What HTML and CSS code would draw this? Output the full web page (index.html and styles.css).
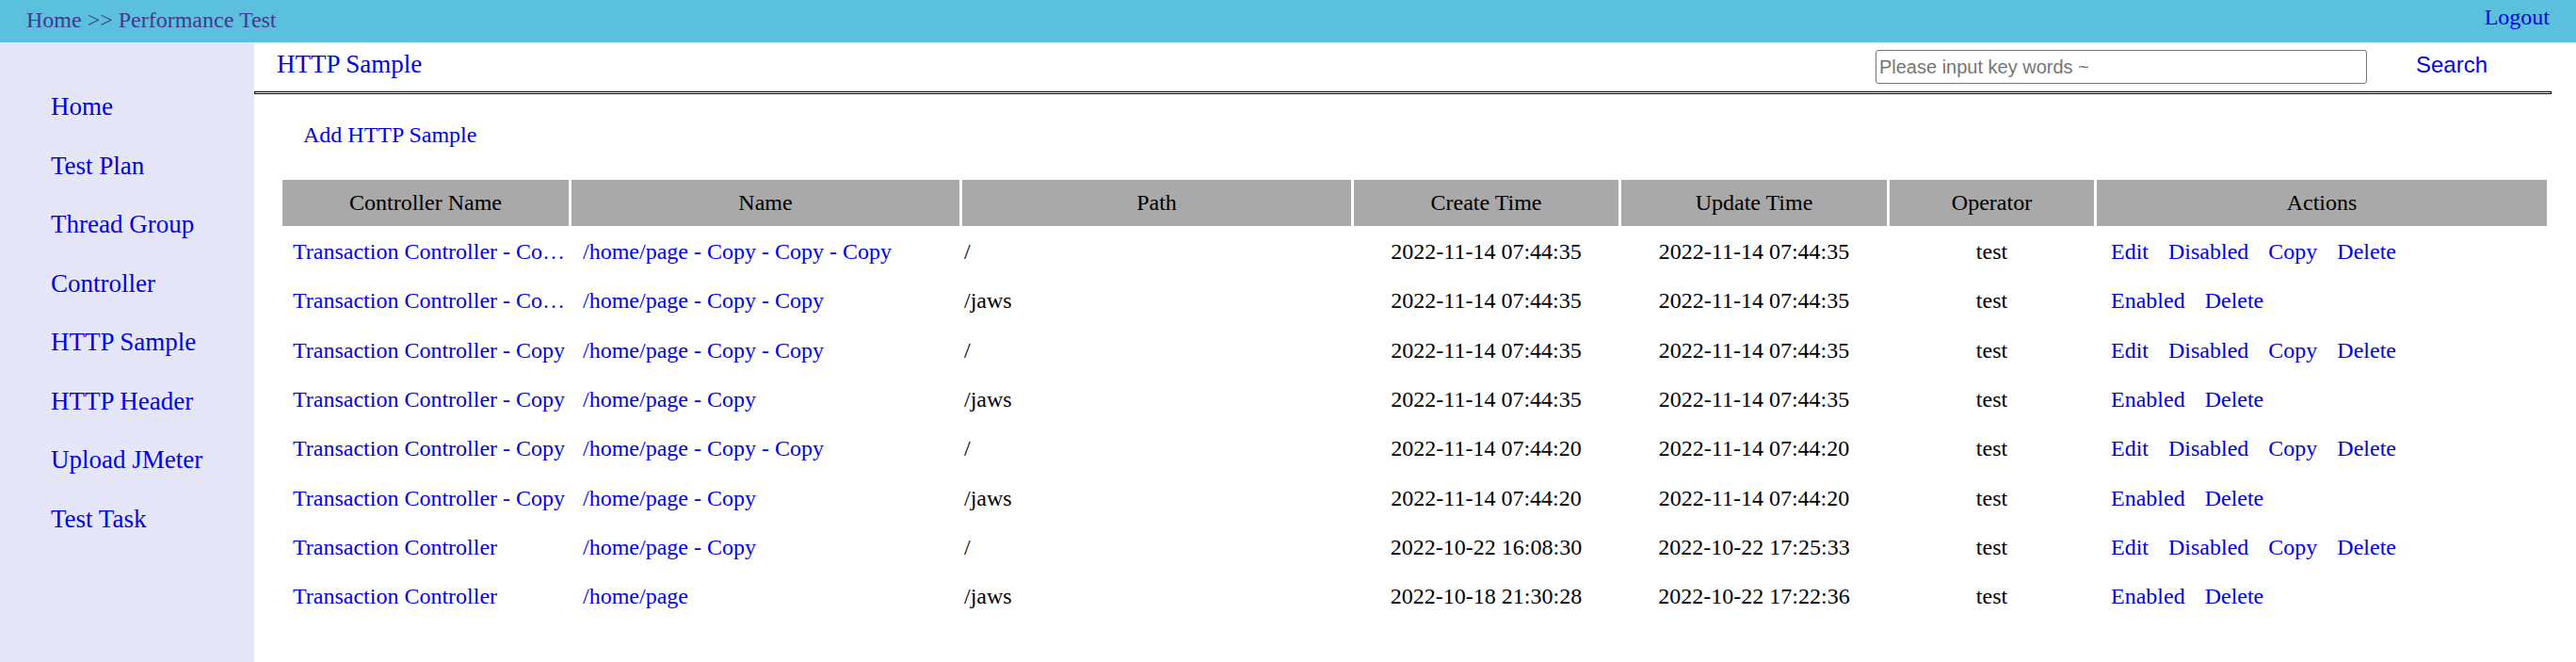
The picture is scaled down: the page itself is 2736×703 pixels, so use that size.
FILE: index.html
```html
<!DOCTYPE html>
<html lang="en">
<head>
<meta charset="utf-8">
<title>HTTP Sample</title>
<link rel="stylesheet" href="styles.css">
</head>
<body>
<header class="topnav">
  <div class="crumb">Home &gt;&gt; Performance Test</div>
  <a class="logout" href="#">Logout</a>
</header>
<div class="layout">
  <nav class="sidebar">
    <a href="#">Home</a>
    <a href="#">Test Plan</a>
    <a href="#">Thread Group</a>
    <a href="#">Controller</a>
    <a href="#">HTTP Sample</a>
    <a href="#">HTTP Header</a>
    <a href="#">Upload JMeter</a>
    <a href="#">Test Task</a>
  </nav>
  <main class="content">
    <div class="titlebar">
      <h1 class="title">HTTP Sample</h1>
      <input class="search-input" type="text" placeholder="Please input key words ~">
      <button class="search-btn" type="button">Search</button>
    </div>
    <div class="rule"></div>
    <div class="add"><a href="#">Add HTTP Sample</a></div>
    <table class="grid">
      <colgroup>
        <col class="w1"><col class="w2"><col class="w3"><col class="w4"><col class="w5"><col class="w6"><col class="w7">
      </colgroup>
      <thead>
        <tr>
          <th>Controller Name</th><th>Name</th><th>Path</th><th>Create Time</th><th>Update Time</th><th>Operator</th><th>Actions</th>
        </tr>
      </thead>
      <tbody>
        <tr>
          <td class="c1"><a class="ellip" href="#" title="Transaction Controller - Copy - Copy">Transaction Controller - Copy - Copy</a></td>
          <td class="c2"><a href="#">/home/page - Copy - Copy - Copy</a></td>
          <td class="c3">/</td>
          <td class="cc">2022-11-14 07:44:35</td>
          <td class="cc">2022-11-14 07:44:35</td>
          <td class="cc">test</td>
          <td class="c7"><a href="#">Edit</a> <a href="#">Disabled</a> <a href="#">Copy</a> <a href="#">Delete</a></td>
        </tr>
        <tr>
          <td class="c1"><a class="ellip" href="#" title="Transaction Controller - Copy - Copy">Transaction Controller - Copy - Copy</a></td>
          <td class="c2"><a href="#">/home/page - Copy - Copy</a></td>
          <td class="c3">/jaws</td>
          <td class="cc">2022-11-14 07:44:35</td>
          <td class="cc">2022-11-14 07:44:35</td>
          <td class="cc">test</td>
          <td class="c7"><a href="#">Enabled</a> <a href="#">Delete</a></td>
        </tr>
        <tr>
          <td class="c1"><a class="ellip" href="#">Transaction Controller - Copy</a></td>
          <td class="c2"><a href="#">/home/page - Copy - Copy</a></td>
          <td class="c3">/</td>
          <td class="cc">2022-11-14 07:44:35</td>
          <td class="cc">2022-11-14 07:44:35</td>
          <td class="cc">test</td>
          <td class="c7"><a href="#">Edit</a> <a href="#">Disabled</a> <a href="#">Copy</a> <a href="#">Delete</a></td>
        </tr>
        <tr>
          <td class="c1"><a class="ellip" href="#">Transaction Controller - Copy</a></td>
          <td class="c2"><a href="#">/home/page - Copy</a></td>
          <td class="c3">/jaws</td>
          <td class="cc">2022-11-14 07:44:35</td>
          <td class="cc">2022-11-14 07:44:35</td>
          <td class="cc">test</td>
          <td class="c7"><a href="#">Enabled</a> <a href="#">Delete</a></td>
        </tr>
        <tr>
          <td class="c1"><a class="ellip" href="#">Transaction Controller - Copy</a></td>
          <td class="c2"><a href="#">/home/page - Copy - Copy</a></td>
          <td class="c3">/</td>
          <td class="cc">2022-11-14 07:44:20</td>
          <td class="cc">2022-11-14 07:44:20</td>
          <td class="cc">test</td>
          <td class="c7"><a href="#">Edit</a> <a href="#">Disabled</a> <a href="#">Copy</a> <a href="#">Delete</a></td>
        </tr>
        <tr>
          <td class="c1"><a class="ellip" href="#">Transaction Controller - Copy</a></td>
          <td class="c2"><a href="#">/home/page - Copy</a></td>
          <td class="c3">/jaws</td>
          <td class="cc">2022-11-14 07:44:20</td>
          <td class="cc">2022-11-14 07:44:20</td>
          <td class="cc">test</td>
          <td class="c7"><a href="#">Enabled</a> <a href="#">Delete</a></td>
        </tr>
        <tr>
          <td class="c1"><a class="ellip" href="#">Transaction Controller</a></td>
          <td class="c2"><a href="#">/home/page - Copy</a></td>
          <td class="c3">/</td>
          <td class="cc">2022-10-22 16:08:30</td>
          <td class="cc">2022-10-22 17:25:33</td>
          <td class="cc">test</td>
          <td class="c7"><a href="#">Edit</a> <a href="#">Disabled</a> <a href="#">Copy</a> <a href="#">Delete</a></td>
        </tr>
        <tr>
          <td class="c1"><a class="ellip" href="#">Transaction Controller</a></td>
          <td class="c2"><a href="#">/home/page</a></td>
          <td class="c3">/jaws</td>
          <td class="cc">2022-10-18 21:30:28</td>
          <td class="cc">2022-10-22 17:22:36</td>
          <td class="cc">test</td>
          <td class="c7"><a href="#">Enabled</a> <a href="#">Delete</a></td>
        </tr>
      </tbody>
    </table>
  </main>
</div>
</body>
</html>
```

FILE: styles.css
```css
html, body {
  margin: 0;
  padding: 0;
  background: #fff;
}

body {
  font-family: "Liberation Serif", "Times New Roman", serif;
  color: #000;
}

a {
  color: #0000ee;
  text-decoration: none;
}

/* Top navigation bar */
.topnav {
  height: 45px;
  background: #5bc0de;
  display: flex;
  justify-content: space-between;
  align-items: flex-start;
  padding: 0 28px;
  box-sizing: border-box;
}

.crumb {
  font-size: 24px;
  line-height: normal;
  color: #3f3b8e;
  margin-top: 8px;
}

.logout {
  font-size: 24px;
  line-height: normal;
  margin-top: 5px;
}

/* Layout */
.layout {
  display: flex;
  min-height: 658px;
}

.sidebar {
  flex: none;
  width: 270px;
  background: #e6e6fa;
  box-sizing: border-box;
  padding: 37px 0 0 54px;
  display: flex;
  flex-direction: column;
  align-items: flex-start;
}

.sidebar a {
  font-size: 27px;
  line-height: 62.5px;
}

.content {
  flex: 1;
  min-width: 0;
}

/* Title bar with search */
.titlebar {
  display: flex;
  align-items: flex-start;
  height: 52px;
  box-sizing: border-box;
  padding: 8px 94px 0 24px;
}

.title {
  margin: 0;
  font-size: 27px;
  font-weight: normal;
  line-height: normal;
  color: #0000ee;
}

.search-input {
  margin: 0 0 0 auto;
  width: 522px;
  height: 36px;
  box-sizing: border-box;
  border: 1px solid #767676;
  border-radius: 3px;
  padding: 0 3px;
  font-family: "Liberation Sans", Arial, sans-serif;
  font-size: 20px;
  color: #000;
  background: #fff;
}

.search-input::placeholder {
  color: #757575;
}

.search-btn {
  margin: 2px 0 0 52px;
  padding: 0;
  border: 0;
  background: none;
  font-family: "Liberation Sans", Arial, sans-serif;
  font-size: 24px;
  line-height: normal;
  color: #0000ee;
  cursor: pointer;
}

.rule {
  height: 1px;
  border: 1px solid #000;
  background: #fff;
  margin-right: 26px;
}

.add {
  margin: 30px 0 0 52px;
  font-size: 24px;
  line-height: normal;
}

/* Table */
.grid {
  margin: 31px 0 0 27px;
  width: 2411px;
  table-layout: fixed;
  border-spacing: 3px;
  font-size: 24px;
}

.w1 { width: 304px; }
.w2 { width: 412px; }
.w3 { width: 413px; }
.w4 { width: 281px; }
.w5 { width: 282px; }
.w6 { width: 217px; }
.w7 { width: 478px; }

.grid th {
  background: #a9a9a9;
  font-weight: normal;
  height: 49px;
  padding: 0;
  text-align: center;
}

.grid tbody tr {
  height: 49.3px;
}

.grid td {
  padding: 0;
  white-space: nowrap;
  vertical-align: middle;
}

.grid .c1 { padding-left: 11px; }
.grid .c2 { padding-left: 12px; }
.grid .c3 { padding-left: 2px; }
.grid .cc { text-align: center; }
.grid .c7 { padding-left: 15px; }

.c7 a {
  margin-right: 15px;
}

.ellip {
  display: block;
  width: 292px;
  overflow: hidden;
  white-space: nowrap;
  text-overflow: ellipsis;
}
```
